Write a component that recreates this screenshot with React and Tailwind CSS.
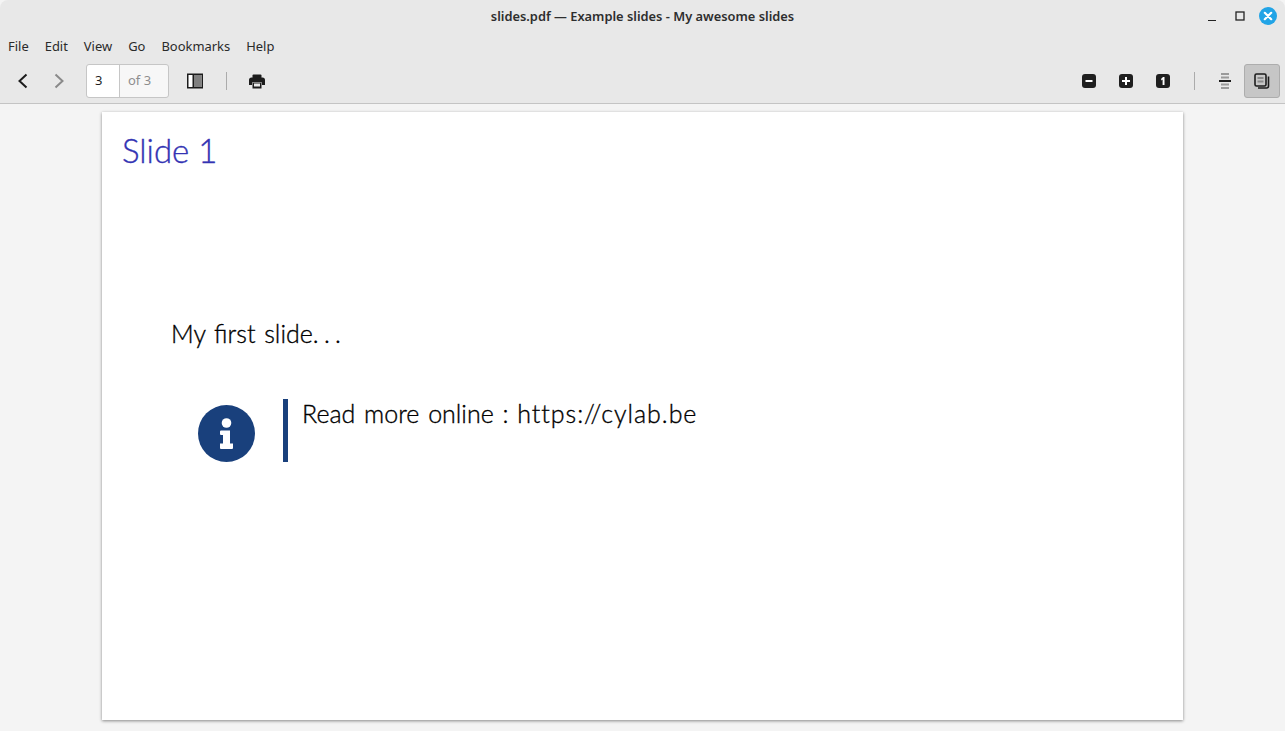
import React from "react";

const ui = "font-['Noto_Sans','Open_Sans',sans-serif]";

function Rounded({ children }) {
  return (
    <svg width="14" height="14" viewBox="0 0 14 14">
      <rect x="0" y="0" width="14" height="14" rx="3" fill="#1f1f1f" />
      {children}
    </svg>
  );
}

export default function App() {
  return (
    <div className={`w-[1285px] h-[731px] overflow-hidden flex flex-col bg-[#f4f4f4] text-[#1f1f1f] ${ui}`}>
      <header className="bg-[#e8e8e8] rounded-t-[8px] border-b border-[#c4c4c4] h-[104px] shrink-0 flex flex-col">
        <div className="h-[33px] relative flex items-center justify-center">
          <span className="text-[12.85px] font-semibold text-[#2e2e2e]">slides.pdf — Example slides - My awesome slides</span>
          <div className="absolute right-[8px] top-[7px] flex items-center">
            <svg width="10" height="18" viewBox="0 0 10 18"><rect x="1" y="13" width="8" height="1" fill="#222" /></svg>
            <svg className="ml-[18px]" width="10" height="10" viewBox="0 0 10 10"><rect x="1" y="1" width="8" height="8" fill="none" stroke="#222" strokeWidth="1.3" /></svg>
            <svg className="ml-[14px]" width="18" height="18" viewBox="0 0 18 18">
              <circle cx="9" cy="9" r="9" fill="#22a4e6" />
              <path d="M5.8 5.8 L12.2 12.2 M12.2 5.8 L5.8 12.2" stroke="#fff" strokeWidth="2.2" strokeLinecap="round" />
            </svg>
          </div>
        </div>
        <nav className="h-[26px] pt-[1px] flex items-center gap-[16px] pl-[8px] text-[12.95px] text-[#2a2a2a]">
          <span>File</span><span>Edit</span><span>View</span><span>Go</span><span>Bookmarks</span><span>Help</span>
        </nav>
        <div className="h-[44px] flex items-center pl-[16px] pr-[5px]">
          <svg width="14" height="16" viewBox="0 0 14 16"><path d="M10.5 1.5 L3.5 8 L10.5 14.5" fill="none" stroke="#1c1c1c" strokeWidth="2" /></svg>
          <svg className="ml-[22px]" width="14" height="16" viewBox="0 0 14 16"><path d="M3.5 1.5 L10.5 8 L3.5 14.5" fill="none" stroke="#8a8a8a" strokeWidth="2" /></svg>
          <div className="ml-[20px] w-[83px] h-[34px] flex border border-[#c6c6c6] rounded-[3px] text-[13px]">
            <div className="w-[33px] bg-white border-r border-[#c6c6c6] rounded-l-[3px] pl-[8px] flex items-center">3</div>
            <div className="flex-1 bg-[#f7f7f7] rounded-r-[3px] pl-[8px] flex items-center text-[#8e8e8e]">of 3</div>
          </div>
          <svg className="ml-[18px]" width="16" height="16" viewBox="0 0 16 16">
            <rect x="0.75" y="1.25" width="14.5" height="13.5" fill="#fff" stroke="#1c1c1c" strokeWidth="1.5" />
            <rect x="7" y="2" width="7.5" height="12" fill="#808080" />
            <rect x="5.5" y="2" width="1.5" height="12" fill="#1c1c1c" />
          </svg>
          <div className="ml-[23px] w-px h-[18px] bg-[#ababab]" />
          <svg className="ml-[22px]" width="16" height="15" viewBox="0 0 16 15">
            <rect x="3.5" y="0.5" width="9" height="4" rx="1" fill="#1c1c1c" />
            <path d="M2.5 3.5 H13.5 A2.5 2.5 0 0 1 16 6 V11 H13 V8.5 H3 V11 H0 V6 A2.5 2.5 0 0 1 2.5 3.5 Z" fill="#1c1c1c" />
            <path d="M3.5 9 H12.5 V14.5 H3.5 Z" fill="#1c1c1c" />
            <rect x="5" y="9.5" width="6" height="3" fill="#e8e8e8" />
          </svg>
          <div className="ml-auto flex items-center">
            <Rounded><rect x="3.5" y="6" width="7" height="2" fill="#fff" /></Rounded>
            <div className="ml-[23px]"><Rounded><path d="M3 6 H6 V3 H8 V6 H11 V8 H8 V11 H6 V8 H3 Z" fill="#fff" /></Rounded></div>
            <div className="ml-[23px]"><Rounded><path d="M5 5 L7 3 H8.5 V11 H6.6 V5.6 L5.6 6.4 Z" fill="#fff" /></Rounded></div>
            <div className="ml-[24px] w-px h-[18px] bg-[#ababab]" />
            <svg className="ml-[24px]" width="12" height="16" viewBox="0 0 12 16">
              <rect x="2" y="0" width="8" height="2" fill="#9a9a9a" /><rect x="2" y="3.5" width="8" height="2" fill="#9a9a9a" />
              <rect x="0" y="7" width="12" height="2" fill="#1c1c1c" />
              <rect x="2" y="10.5" width="8" height="2" fill="#9a9a9a" /><rect x="2" y="14" width="8" height="2" fill="#9a9a9a" />
            </svg>
            <div className="ml-[13px] w-[36px] h-[34px] bg-[#c6c6c6] border border-[#adadad] rounded-[3px] flex items-center justify-center">
              <svg width="16" height="16" viewBox="0 0 16 16">
                <rect x="1" y="1" width="11" height="12" rx="1.5" fill="none" stroke="#1c1c1c" strokeWidth="1.6" />
                <path d="M14.5 3.5 V13 A2 2 0 0 1 12.5 15 H4" fill="none" stroke="#1c1c1c" strokeWidth="1.6" />
                <rect x="3.5" y="4" width="6" height="2" fill="#8a8a8a" /><rect x="3.5" y="7.5" width="6" height="2" fill="#8a8a8a" />
              </svg>
            </div>
          </div>
        </div>
      </header>

      <main className="flex-1 pt-[8px] pl-[102px]">
        <section className="w-[1081px] h-[608px] bg-white shadow-[0_1px_3px_rgba(0,0,0,0.45)] font-['Lato',sans-serif] font-light [-webkit-text-stroke:0.35px_currentColor] pl-[20px] pt-[16px]">
          <h1 className="text-[33px] leading-[45px] text-[#3333b3]">Slide 1</h1>
          <p className="mt-[143px] ml-[49px] text-[25px] leading-[34px] text-black [word-spacing:2px]">My first slide<span className="[word-spacing:-1.5px]">. . .</span></p>
          <div className="mt-[49px] ml-[76px] flex">
            <svg className="mt-[6px]" width="57" height="57" viewBox="0 0 57 57">
              <circle cx="28.5" cy="28.5" r="28.5" fill="#19407c" />
              <circle cx="28.5" cy="18" r="4.8" fill="#fff" />
              <path d="M23 25.5 H32 V38.5 H35 V43 Q35 44 34 44 H23 Q22 44 22 43 V38.5 H25 V30 H23 Q22 30 22 29 V26.5 Q22 25.5 23 25.5 Z" fill="#fff" />
            </svg>
            <div className="ml-[28px] w-[5px] h-[63px] bg-[#19407c]" />
            <p className="-mt-[1px] ml-[14px] text-[25px] leading-[30px] text-black [word-spacing:2px]">Read more online : <span className="tracking-[0.95px]">https://cylab.be</span></p>
          </div>
        </section>
      </main>
    </div>
  );
}
